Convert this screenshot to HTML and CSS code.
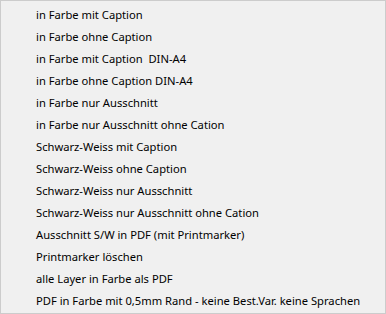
FILE: index.html
```html
<!DOCTYPE html>
<html>
  <head>
    <title>Menu</title>
    <link rel="stylesheet" href="styles.css">
  </head>
  <body>
    <ul class="menu">
      <li>in Farbe mit Caption</li>
      <li>in Farbe ohne Caption</li>
      <li>in Farbe mit Caption&nbsp; DIN-A4</li>
      <li>in Farbe ohne Caption DIN-A4</li>
      <li>in Farbe nur Ausschnitt</li>
      <li>in Farbe nur Ausschnitt ohne Cation</li>
      <li>Schwarz-Weiss mit Caption</li>
      <li>Schwarz-Weiss ohne Caption</li>
      <li>Schwarz-Weiss nur Ausschnitt</li>
      <li>Schwarz-Weiss nur Ausschnitt ohne Cation</li>
      <li>Ausschnitt S/W in PDF (mit Printmarker)</li>
      <li>Printmarker löschen</li>
      <li>alle Layer in Farbe als PDF</li>
      <li>PDF in Farbe mit 0,5mm Rand - keine Best.Var. keine Sprachen</li>
    </ul>
  </body>
</html>
```

FILE: styles.css
```css
/* context menu */
body {
  margin: 0;
  font-family: "Noto Sans", sans-serif;
  font-size: 11.2px;
  color: #000000;
  background-color: #f0f0f0;
}

.menu {
  list-style: none;
  margin: 0;
  width: 384px;
  height: 309px;
  padding: 3px 0 0 0;
  background-color: #f0f0f0;
  border: 1px solid #cccccc;
}

.menu li {
  height: 22px;
  line-height: 22px;
  padding-left: 35px;
  white-space: nowrap;
}
```
